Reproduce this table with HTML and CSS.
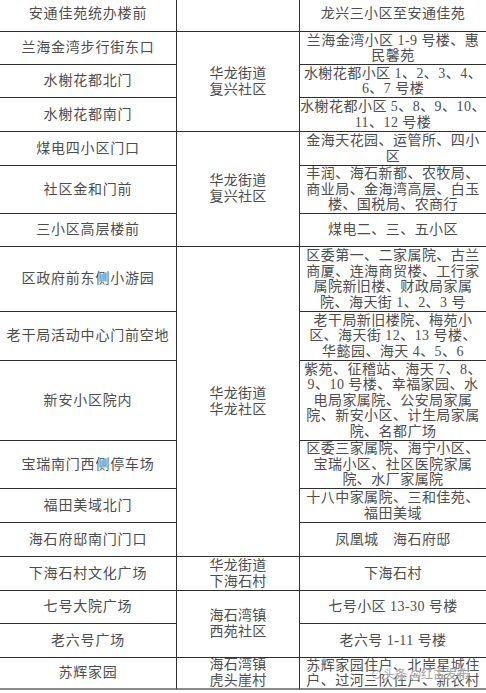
FILE: index.html
```html
<!DOCTYPE html>
<html lang="zh-CN">
<head>
<meta charset="utf-8">
<title>投放点</title>
<link rel="stylesheet" href="styles.css">
</head>
<body>
<div class="sheet">
  <div class="cell c1">安通佳苑统办楼前</div>
  <div class="cell c2"></div>
  <div class="cell c3">龙兴三小区至安通佳苑</div>

  <div class="cell c1">兰海金湾步行街东口</div>
  <div class="cell c2 s3">华龙街道<br>复兴社区</div>
  <div class="cell c3">兰海金湾小区 1-9 号楼、惠<br>民馨苑</div>

  <div class="cell c1">水榭花都北门</div>
  <div class="cell c3">水榭花都小区 1、2、3、4、<br>6、7 号楼</div>

  <div class="cell c1">水榭花都南门</div>
  <div class="cell c3">水榭花都小区 5、8、9、10、<br>11、12 号楼</div>

  <div class="cell c1">煤电四小区门口</div>
  <div class="cell c2 s3">华龙街道<br>复兴社区</div>
  <div class="cell c3">金海天花园、运管所、四小<br>区</div>

  <div class="cell c1">社区金和门前</div>
  <div class="cell c3">丰润、海石新都、农牧局、<br>商业局、金海湾高层、白玉<br>楼、国税局、农商行</div>

  <div class="cell c1">三小区高层楼前</div>
  <div class="cell c3">煤电二、三、五小区</div>

  <div class="cell c1">区政府前东侧小游园</div>
  <div class="cell c2 s6">华龙街道<br>华龙社区</div>
  <div class="cell c3">区委第一、二家属院、古兰<br>商厦、连海商贸楼、工行家<br>属院新旧楼、财政局家属<br>院、海天街 1、2、3 号</div>

  <div class="cell c1">老干局活动中心门前空地</div>
  <div class="cell c3">老干局新旧楼院、梅苑小<br>区、海天街 12、13 号楼、<br>华懿园、海天 4、5、6</div>

  <div class="cell c1">新安小区院内</div>
  <div class="cell c3">紫苑、征稽站、海天 7、8、<br>9、10 号楼、幸福家园、水<br>电局家属院、公安局家属<br>院、新安小区、计生局家属<br>院、名都广场</div>

  <div class="cell c1">宝瑞南门西侧停车场</div>
  <div class="cell c3">区委三家属院、海宁小区、<br>宝瑞小区、社区医院家属<br>院、水厂家属院</div>

  <div class="cell c1">福田美域北门</div>
  <div class="cell c3">十八中家属院、三和佳苑、<br>福田美域</div>

  <div class="cell c1">海石府邸南门门口</div>
  <div class="cell c3">凤凰城　海石府邸</div>

  <div class="cell c1">下海石村文化广场</div>
  <div class="cell c2">华龙街道<br>下海石村</div>
  <div class="cell c3">下海石村</div>

  <div class="cell c1">七号大院广场</div>
  <div class="cell c2 s2">海石湾镇<br>西苑社区</div>
  <div class="cell c3">七号小区 13-30 号楼</div>

  <div class="cell c1">老六号广场</div>
  <div class="cell c3">老六号 1-11 号楼</div>

  <div class="cell c1 last">苏辉家园</div>
  <div class="cell c2 last">海石湾镇<br>虎头崖村</div>
  <div class="cell c3 last">苏辉家园住户、北岸星城住<br>户、过河三队住户、新农村</div>
</div>
<div class="watermark"><span class="wm-icon"></span>头条 @红古发布</div>
</body>
</html>
```

FILE: styles.css
```css
html, body {
  margin: 0;
  padding: 0;
  background: #ffffff;
}

body {
  width: 486px;
  height: 693px;
  overflow: hidden;
  position: relative;
  font-family: "Liberation Serif", "Noto Sans CJK SC", serif;
  color: #4d4d4d;
}

.sheet {
  display: grid;
  grid-template-columns: 177px 123px 186px;
  grid-template-rows: 36px 33px 33px 34px 34px 48px 33px 65px 49px 80px 48px 34px 34px 34px 33px 34px 32px;
  margin-top: -4px;
}

.cell {
  box-sizing: border-box;
  display: flex;
  align-items: center;
  justify-content: center;
  text-align: center;
  border-bottom: 1px solid #2f2f2f;
  font-size: 14px;
  white-space: nowrap;
}

.c1 {
  grid-column: 1;
  border-right: 1px solid #2f2f2f;
  letter-spacing: 0.8px;
  line-height: 16px;
}

.c2 {
  grid-column: 2;
  border-right: 1px solid #2f2f2f;
  letter-spacing: 0.3px;
  line-height: 16px;
}

.c3 {
  grid-column: 3;
  letter-spacing: 0.45px;
  line-height: 15.5px;
}

.s2 { grid-row: span 2; }
.s3 { grid-row: span 3; }
.s6 { grid-row: span 6; }

.last {
  border-bottom: 2px solid #8a8a8a;
}

.watermark {
  position: absolute;
  left: 372px;
  top: 667px;
  font-family: "Noto Sans CJK SC", sans-serif;
  font-size: 12px;
  line-height: 14px;
  color: rgba(130, 130, 130, 0.75);
  text-shadow: 0 0 2px #ffffff, 0 0 2px #ffffff;
  display: flex;
  align-items: center;
  gap: 2px;
}

.wm-icon {
  width: 9px;
  height: 9px;
  border: 1.5px solid rgba(130, 130, 130, 0.75);
  border-radius: 50%;
  box-sizing: border-box;
}
```
